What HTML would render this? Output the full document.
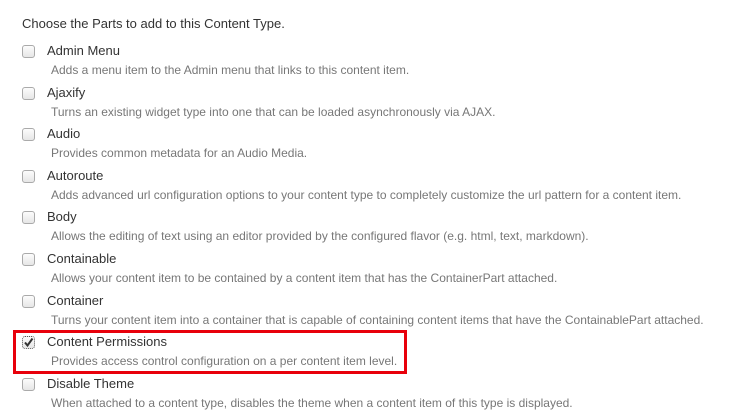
<html><head><style>
body{margin:0;width:729px;height:418px;background:#fff;font-family:"Liberation Sans",sans-serif;position:relative;overflow:hidden}
.h{position:absolute;left:22px;top:16px;font-size:13px;color:#333}
.cb{position:absolute;left:22px;width:11px;height:11px;border:1px solid #aaa;border-radius:3px;background:linear-gradient(#fcfcfc,#e6e6e6)}
.l{position:absolute;left:47px;font-size:13px;color:#333;white-space:nowrap}
.d{position:absolute;left:51px;font-size:12px;color:#777;white-space:nowrap}
.box{position:absolute;left:13px;top:330px;width:388px;height:38px;border:3px solid #e8000b}
</style></head><body>
<div class="h">Choose the Parts to add to this Content Type.</div>

<div class="cb" style="top:45px"></div><div class="l" style="top:43px">Admin Menu</div><div class="d" style="top:63px">Adds a menu item to the Admin menu that links to this content item.</div>
<div class="cb" style="top:87px"></div><div class="l" style="top:85px">Ajaxify</div><div class="d" style="top:105px">Turns an existing widget type into one that can be loaded asynchronously via AJAX.</div>
<div class="cb" style="top:128px"></div><div class="l" style="top:126px">Audio</div><div class="d" style="top:146px">Provides common metadata for an Audio Media.</div>
<div class="cb" style="top:170px"></div><div class="l" style="top:168px">Autoroute</div><div class="d" style="top:188px">Adds advanced url configuration options to your content type to completely customize the url pattern for a content item.</div>
<div class="cb" style="top:211px"></div><div class="l" style="top:209px">Body</div><div class="d" style="top:229px">Allows the editing of text using an editor provided by the configured flavor (e.g. html, text, markdown).</div>
<div class="cb" style="top:253px"></div><div class="l" style="top:251px">Containable</div><div class="d" style="top:271px">Allows your content item to be contained by a content item that has the ContainerPart attached.</div>
<div class="cb" style="top:295px"></div><div class="l" style="top:293px">Container</div><div class="d" style="top:313px">Turns your content item into a container that is capable of containing content items that have the ContainablePart attached.</div>
<div class="cb" style="top:336px;border:1px dotted #555"><svg width="11" height="11" viewBox="0 0 11 11" style="position:absolute;left:0;top:0"><path d="M2 5.5 L4.5 8.5 L9.5 1.5" stroke="#333" stroke-width="2" fill="none"/></svg></div><div class="l" style="top:334px">Content Permissions</div><div class="d" style="top:354px">Provides access control configuration on a per content item level.</div>
<div class="box"></div>
<div class="cb" style="top:378px"></div><div class="l" style="top:376px">Disable Theme</div><div class="d" style="top:396px">When attached to a content type, disables the theme when a content item of this type is displayed.</div>
</body></html>
